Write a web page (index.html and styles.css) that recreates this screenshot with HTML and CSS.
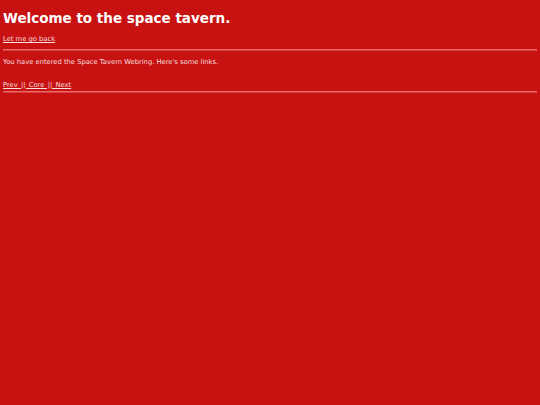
FILE: index.html
```html
<!DOCTYPE html>
<html>
<head>
<meta charset="utf-8">
<link rel="stylesheet" href="styles.css">
</head>
<body>
<h1 class="title">Welcome to the space tavern.</h1>
<p class="back"><a href="#">Let me go back</a></p>
<hr class="rule">
<p class="intro">You have entered the Space Tavern Webring. Here's some links.</p>
<p class="nav"><a href="#">Prev || Core || Next</a></p>
<hr class="rule">
</body>
</html>
```
FILE: styles.css
```css
html, body {
  background: #c81212;
}
body {
  margin: 0;
  padding: 3px;
  color: #f4dede;
  font-family: "DejaVu Sans", sans-serif;
  font-size: 6.75px;
}
a {
  color: #f4dede;
  text-decoration: underline;
}
.title {
  font-size: 13.5px;
  font-weight: bold;
  color: #ffffff;
  margin: 7px 0 9px 0;
}
.back {
  margin: 0 0 6px 0;
}
.rule {
  border: none;
  border-top: 1px solid #e86a6a;
  border-bottom: 1px solid #d84040;
  margin: 0 0 7px 0;
}
.intro {
  margin: 0 0 15px 0;
}
.nav {
  margin: 0 0 2px 0;
  word-spacing: 1.1px;
}
```
